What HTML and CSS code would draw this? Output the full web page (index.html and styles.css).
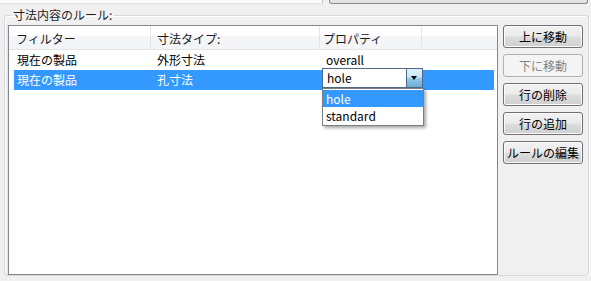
FILE: index.html
```html
<!DOCTYPE html>
<html lang="ja">

<head>
    <meta charset="UTF-8">
    <meta name="viewport" content="width=device-width, initial-scale=1.0">
    <title>寸法内容のルール</title>
    <link rel="stylesheet" href="styles.css">
</head>

<body>
    <div class="top-strip">
        <div class="top-field"></div>
        <div class="top-button"></div>
    </div>

    <fieldset class="rules">
        <legend>寸法内容のルール:</legend>
        <div class="rules-body">
            <div class="list-view">
                <div class="list-header">
                    <div class="head-cell head-filter">フィルター</div>
                    <div class="head-cell head-type">寸法タイプ:</div>
                    <div class="head-cell head-prop">プロパティ</div>
                    <div class="head-cell head-fill"></div>
                </div>
                <div class="list-row">
                    <div class="cell cell-filter">現在の製品</div>
                    <div class="cell cell-type">外形寸法</div>
                    <div class="cell cell-prop">overall</div>
                </div>
                <div class="list-row selected">
                    <div class="cell cell-filter">現在の製品</div>
                    <div class="cell cell-type">孔寸法</div>
                    <div class="cell cell-prop"></div>
                </div>

                <!-- cell editor opened over the selected row -->
                <div class="combo">
                    <span class="combo-value">hole</span>
                    <span class="combo-arrow"></span>
                </div>
                <ul class="combo-list">
                    <li class="active">hole</li>
                    <li>standard</li>
                </ul>
            </div>

            <div class="button-column">
                <button type="button" class="win-button">上に移動</button>
                <button type="button" class="win-button" disabled>下に移動</button>
                <button type="button" class="win-button">行の削除</button>
                <button type="button" class="win-button">行の追加</button>
                <button type="button" class="win-button">ルールの編集</button>
            </div>
        </div>
    </fieldset>
</body>

</html>
```

FILE: styles.css
```css
body {
    margin: 0;
    background-color: #f0f0f0;
    font-family: "Noto Sans CJK JP", "Noto Sans", sans-serif;
    font-size: 12px;
    color: #000;
}

/* bits of the controls above, cut off by the window */
.top-strip {
    display: flex;
    height: 4px;
}

.top-field {
    width: 322px;
    background-color: #fcfcfc;
    border-right: 1px solid #c9c9c9;
    border-bottom: 1px solid #e2e2e2;
}

.top-button {
    margin-left: 6px;
    width: 257px;
    background-color: #e3e3e3;
    border: 1px solid #8a8a8a;
    border-top: none;
    border-radius: 0 0 3px 3px;
}

/* group box */
.rules {
    margin: 3px 2px 0 4px;
    padding: 2px 5px 0 3px;
    border: 1px solid #d5d9dd;
    border-radius: 3px;
    box-shadow: inset 1px 1px 0 #fff, 1px 1px 0 #fff;
}

.rules legend {
    margin-left: 3px;
    padding: 0 2px;
    line-height: 16px;
    color: #1e1e1e;
}

.rules-body {
    display: flex;
    gap: 5px;
}

/* list view */
.list-view {
    position: relative;
    width: 490px;
    height: 250px;
    box-sizing: border-box;
    background-color: #fff;
    border: 1px solid #828790;
    box-shadow: -1px 0 0 #e3e3e3;
}

.list-header {
    display: flex;
    height: 24px;
    box-sizing: border-box;
    border-bottom: 1px solid #e5e5e5;
    background: linear-gradient(to bottom, #fff 0, #fff 42%, #f4f5f7 42%, #f4f5f7 100%);
}

.head-cell {
    box-sizing: border-box;
    padding-top: 2px;
    line-height: 21px;
    border-right: 1px solid #e3e5e8;
    color: #1a1a1a;
    white-space: nowrap;
}

.head-filter {
    width: 142px;
    padding-left: 7px;
}

.head-type {
    width: 169px;
    padding-left: 6px;
}

.head-prop {
    width: 102px;
    padding-left: 3px;
}

.head-fill {
    flex: 1;
    border-right: none;
}

.list-row {
    display: flex;
    margin-left: 5px;
    width: 480px;
    height: 20px;
    line-height: 20px;
}

.list-row.selected {
    background-color: #3399ff;
    color: #fff;
}

.cell {
    box-sizing: border-box;
    white-space: nowrap;
}

.cell-filter {
    width: 136px;
    padding-left: 3px;
}

.cell-type {
    width: 169px;
    padding-left: 7px;
}

.cell-prop {
    flex: 1;
    padding-left: 7px;
}

/* combo box editor */
.combo {
    position: absolute;
    left: 313px;
    top: 42px;
    width: 101px;
    height: 20px;
    box-sizing: border-box;
    display: flex;
    background-color: #fff;
    border: 1px solid #4e6a86;
}

.combo-value {
    flex: 1;
    padding-left: 4px;
    line-height: 18px;
}

.combo-arrow {
    position: relative;
    width: 15px;
    border-left: 1px solid #4e6a86;
    background: linear-gradient(to bottom, #e3f2fb 0, #c4e5f6 45%, #8fc6e6 55%, #6aaed8 100%);
}

.combo-arrow::after {
    content: "";
    position: absolute;
    left: 4px;
    top: 7px;
    border-left: 3.5px solid transparent;
    border-right: 3.5px solid transparent;
    border-top: 4px solid #000;
}

.combo-list {
    position: absolute;
    left: 313px;
    top: 62px;
    width: 102px;
    margin: 0;
    padding: 1px 0;
    box-sizing: border-box;
    list-style: none;
    background-color: #fff;
    border: 1px solid #7a7f86;
    box-shadow: 2px 2px 3px rgba(0, 0, 0, 0.35);
}

.combo-list li {
    height: 17px;
    line-height: 17px;
    padding-left: 3px;
}

.combo-list li.active {
    background-color: #3399ff;
    color: #fff;
}

/* push buttons */
.button-column {
    display: flex;
    flex-direction: column;
    gap: 6px;
    width: 80px;
}

.win-button {
    height: 23px;
    padding: 0;
    font-family: inherit;
    font-size: 12px;
    line-height: 20px;
    color: #000;
    border: 1px solid #707070;
    border-radius: 3px;
    background: linear-gradient(to bottom, #f2f2f2 0, #ebebeb 48%, #dddddd 52%, #cfcfcf 100%);
    box-shadow: inset 0 0 0 1px #fcfcfc;
    white-space: nowrap;
}

.win-button:disabled {
    color: #838383;
    border-color: #adb2b5;
    background: #f4f4f4;
    box-shadow: none;
}
```
